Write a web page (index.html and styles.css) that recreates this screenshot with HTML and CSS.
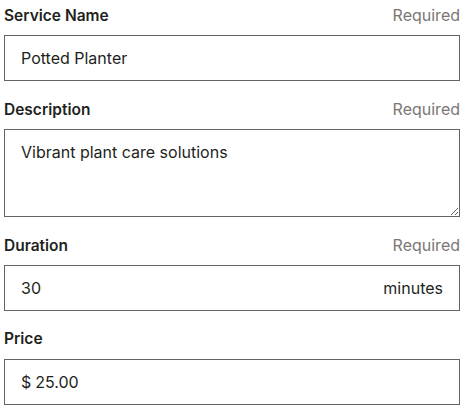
FILE: index.html
```html
<!DOCTYPE html>
<html>
<head>
<meta charset="utf-8">
<link rel="stylesheet" href="styles.css">
</head>
<body>
<form class="form">
  <div class="field">
    <div class="label-row"><label class="label">Service Name</label><span class="req">Required</span></div>
    <div class="box"><input class="control" type="text" value="Potted Planter"></div>
  </div>
  <div class="field">
    <div class="label-row"><label class="label">Description</label><span class="req">Required</span></div>
    <textarea class="area">Vibrant plant care solutions</textarea>
  </div>
  <div class="field">
    <div class="label-row"><label class="label">Duration</label><span class="req">Required</span></div>
    <div class="box"><input class="control" type="text" value="30"><span class="suffix">minutes</span></div>
  </div>
  <div class="field">
    <div class="label-row"><label class="label">Price</label></div>
    <div class="box"><span class="prefix">$</span><input class="control" type="text" value="25.00"></div>
  </div>
</form>
</body>
</html>
```
FILE: styles.css
```css
html, body {
  margin: 0;
  padding: 0;
  background: #ffffff;
}
body {
  font-family: Inter, "Noto Sans", sans-serif;
  color: #221f1c;
}
.form {
  display: flex;
  flex-direction: column;
  gap: 16px;
  padding: 3px 6px 0 4px;
}
.field {
  display: flex;
  flex-direction: column;
  gap: 8px;
}
.label-row {
  display: flex;
  justify-content: space-between;
  align-items: baseline;
  line-height: 24px;
  height: 24px;
}
.label {
  font-size: 15.5px;
  font-weight: 600;
  color: #221f1c;
}
.req {
  font-size: 16px;
  color: #7a7775;
}
.box {
  display: flex;
  align-items: center;
  height: 46px;
  box-sizing: border-box;
  border: 1px solid #67625d;
  padding: 0 16px;
  background: #fff;
}
.control {
  flex: 1;
  min-width: 0;
  border: 0;
  outline: 0;
  padding: 0;
  margin: 0;
  background: transparent;
  font: inherit;
  font-size: 16px;
  color: #221f1c;
}
.suffix {
  font-size: 16px;
  color: #221f1c;
}
.prefix {
  font-size: 16px;
  color: #221f1c;
  margin-right: 4px;
}
.area {
  display: block;
  box-sizing: border-box;
  width: 100%;
  height: 88px;
  margin: 0;
  border: 1px solid #67625d;
  border-radius: 0;
  padding: 10px 16px;
  font-family: inherit;
  font-size: 16px;
  line-height: 24px;
  color: #221f1c;
  resize: vertical;
  outline: 0;
}
```
